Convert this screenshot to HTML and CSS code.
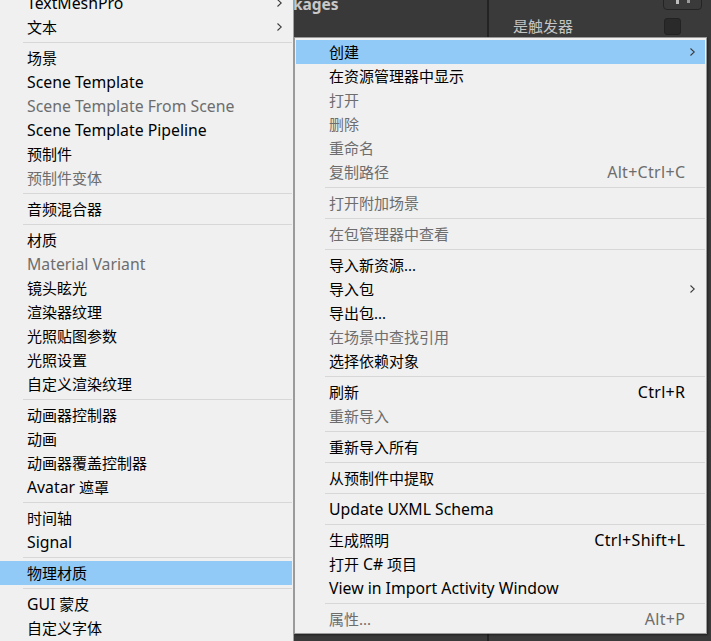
FILE: index.html
```html
<!DOCTYPE html>
<html lang="zh-CN">
<head>
<meta charset="utf-8">
<title>Unity 右键菜单</title>
<link rel="stylesheet" href="styles.css">
</head>
<body>
<div class="editor">
  <div class="project-panel">
    <div class="panel-header"><span class="panel-title">Packages</span></div>
  </div>
  <div class="divider"></div>
  <div class="inspector">
    <div class="insp-toolbar">
      <div class="tool-btn">
        <svg width="20" height="6" viewBox="0 0 20 6"><rect x="3" y="0" width="3" height="4" fill="#bdbdbd"/><rect x="14" y="0" width="3" height="3" fill="#9a9a9a"/></svg>
      </div>
    </div>
    <div class="insp-row">
      <span class="insp-label">是触发器</span>
      <span class="checkbox"></span>
    </div>
  </div>
</div>

<div class="menu menu-left">
  <div class="item sub"><span class="en">TextMeshPro</span><svg class="arrow" viewBox="0 0 5 8"><polyline points="0.5,0.5 4.3,4 0.5,7.5"/></svg></div>
  <div class="item sub"><span>文本</span><svg class="arrow" viewBox="0 0 5 8"><polyline points="0.5,0.5 4.3,4 0.5,7.5"/></svg></div>
  <div class="sep"></div>
  <div class="item"><span>场景</span></div>
  <div class="item"><span class="en">Scene Template</span></div>
  <div class="item dis"><span class="en">Scene Template From Scene</span></div>
  <div class="item"><span class="en">Scene Template Pipeline</span></div>
  <div class="item"><span>预制件</span></div>
  <div class="item dis"><span>预制件变体</span></div>
  <div class="sep"></div>
  <div class="item"><span>音频混合器</span></div>
  <div class="sep"></div>
  <div class="item"><span>材质</span></div>
  <div class="item dis"><span class="en">Material Variant</span></div>
  <div class="item"><span>镜头眩光</span></div>
  <div class="item"><span>渲染器纹理</span></div>
  <div class="item"><span>光照贴图参数</span></div>
  <div class="item"><span>光照设置</span></div>
  <div class="item"><span>自定义渲染纹理</span></div>
  <div class="sep"></div>
  <div class="item"><span>动画器控制器</span></div>
  <div class="item"><span>动画</span></div>
  <div class="item"><span>动画器覆盖控制器</span></div>
  <div class="item"><span><span class="en">Avatar</span> 遮罩</span></div>
  <div class="sep"></div>
  <div class="item"><span>时间轴</span></div>
  <div class="item"><span class="en">Signal</span></div>
  <div class="sep"></div>
  <div class="item hl"><span>物理材质</span></div>
  <div class="sep"></div>
  <div class="item"><span><span class="en">GUI</span> 蒙皮</span></div>
  <div class="item"><span>自定义字体</span></div>
</div>

<div class="menu menu-right">
  <div class="item sub hl"><span>创建</span><svg class="arrow" viewBox="0 0 5 8"><polyline points="0.5,0.5 4.3,4 0.5,7.5"/></svg></div>
  <div class="item"><span>在资源管理器中显示</span></div>
  <div class="item dis"><span>打开</span></div>
  <div class="item dis"><span>删除</span></div>
  <div class="item dis"><span>重命名</span></div>
  <div class="item dis"><span>复制路径</span><span class="key">Alt+Ctrl+C</span></div>
  <div class="sep"></div>
  <div class="item dis"><span>打开附加场景</span></div>
  <div class="sep"></div>
  <div class="item dis"><span>在包管理器中查看</span></div>
  <div class="sep"></div>
  <div class="item"><span>导入新资源...</span></div>
  <div class="item sub"><span>导入包</span><svg class="arrow" viewBox="0 0 5 8"><polyline points="0.5,0.5 4.3,4 0.5,7.5"/></svg></div>
  <div class="item"><span>导出包...</span></div>
  <div class="item dis"><span>在场景中查找引用</span></div>
  <div class="item"><span>选择依赖对象</span></div>
  <div class="sep"></div>
  <div class="item"><span>刷新</span><span class="key">Ctrl+R</span></div>
  <div class="item dis"><span>重新导入</span></div>
  <div class="sep"></div>
  <div class="item"><span>重新导入所有</span></div>
  <div class="sep"></div>
  <div class="item"><span>从预制件中提取</span></div>
  <div class="sep"></div>
  <div class="item"><span class="en">Update UXML Schema</span></div>
  <div class="sep"></div>
  <div class="item"><span>生成照明</span><span class="key">Ctrl+Shift+L</span></div>
  <div class="item"><span>打开 <span class="en">C#</span> 项目</span></div>
  <div class="item"><span class="en">View in Import Activity Window</span></div>
  <div class="sep"></div>
  <div class="item dis"><span>属性...</span><span class="key">Alt+P</span></div>
</div>
</body>
</html>
```

FILE: styles.css
```css
* { box-sizing: border-box; }

html, body {
  margin: 0;
  padding: 0;
}

body {
  width: 711px;
  height: 641px;
  overflow: hidden;
  position: relative;
  background: #383838;
  font-family: "Noto Sans", "Noto Sans CJK SC", sans-serif;
  font-size: 15px;
}

/* ---------- background editor ---------- */
.editor {
  display: flex;
  width: 711px;
  height: 641px;
}

.project-panel {
  width: 487px;
  background: #393939;
}

.panel-header {
  padding-left: 266px;
  margin-top: -3px;
  line-height: 15px;
}

.panel-title {
  color: #c8c8c8;
  font-weight: 700;
  font-size: 15.5px;
}

.divider {
  width: 2px;
  background: #232323;
}

.inspector {
  flex: 1;
  background: #3a3a3a;
  display: flex;
  flex-direction: column;
}

.insp-toolbar {
  height: 10px;
  display: flex;
  justify-content: flex-end;
  align-items: flex-end;
  padding-right: 9px;
}

.tool-btn {
  width: 39px;
  height: 20px;
  border: 1px solid #242424;
  border-radius: 4px;
  background: #3a3a3a;
  display: flex;
  align-items: flex-end;
  justify-content: center;
  padding-bottom: 3px;
  flex-shrink: 0;
}

.insp-row {
  margin-top: 8px;
  height: 17px;
  display: flex;
  align-items: center;
  padding-left: 24px;
}

.insp-label {
  width: 151px;
  color: #c4c4c4;
  line-height: 17px;
}

.checkbox {
  width: 17px;
  height: 17px;
  background: #2a2a2a;
  border: 1px solid #222;
  border-radius: 3px;
}

/* ---------- context menus ---------- */
.menu {
  position: absolute;
  background: #f0f0f0;
  border: 1px solid #a0a0a0;
  padding: 2px 1px;
  color: #000;
}

.menu-left {
  left: -8px;
  top: -12px;
  width: 302px;
}

.menu-right {
  left: 294px;
  top: 37px;
  width: 413px;
  border-color: #9a9a9a;
  box-shadow: 1px 1px 2px rgba(0, 0, 0, 0.45);
}

.item {
  height: 24px;
  line-height: 24px;
  padding: 0 20px 0 33px;
  display: flex;
  justify-content: space-between;
  align-items: center;
  white-space: nowrap;
}

.en {
  font-size: 15.8px;
}

.key {
  font-size: 16px;
  letter-spacing: 0.3px;
  margin-right: -0.3px;
}

.item.sub {
  padding-right: 10px;
}

.item.dis {
  color: #6d6d6d;
}

.item.hl {
  background: #91c9f7;
}

.arrow {
  width: 5px;
  height: 8px;
  fill: none;
  stroke: #3a3a3a;
  stroke-width: 1.1;
}

.sep {
  height: 7px;
  padding: 3px 0 3px 29px;
}

.sep::after {
  content: "";
  display: block;
  height: 1px;
  background: #d7d7d7;
}
```
